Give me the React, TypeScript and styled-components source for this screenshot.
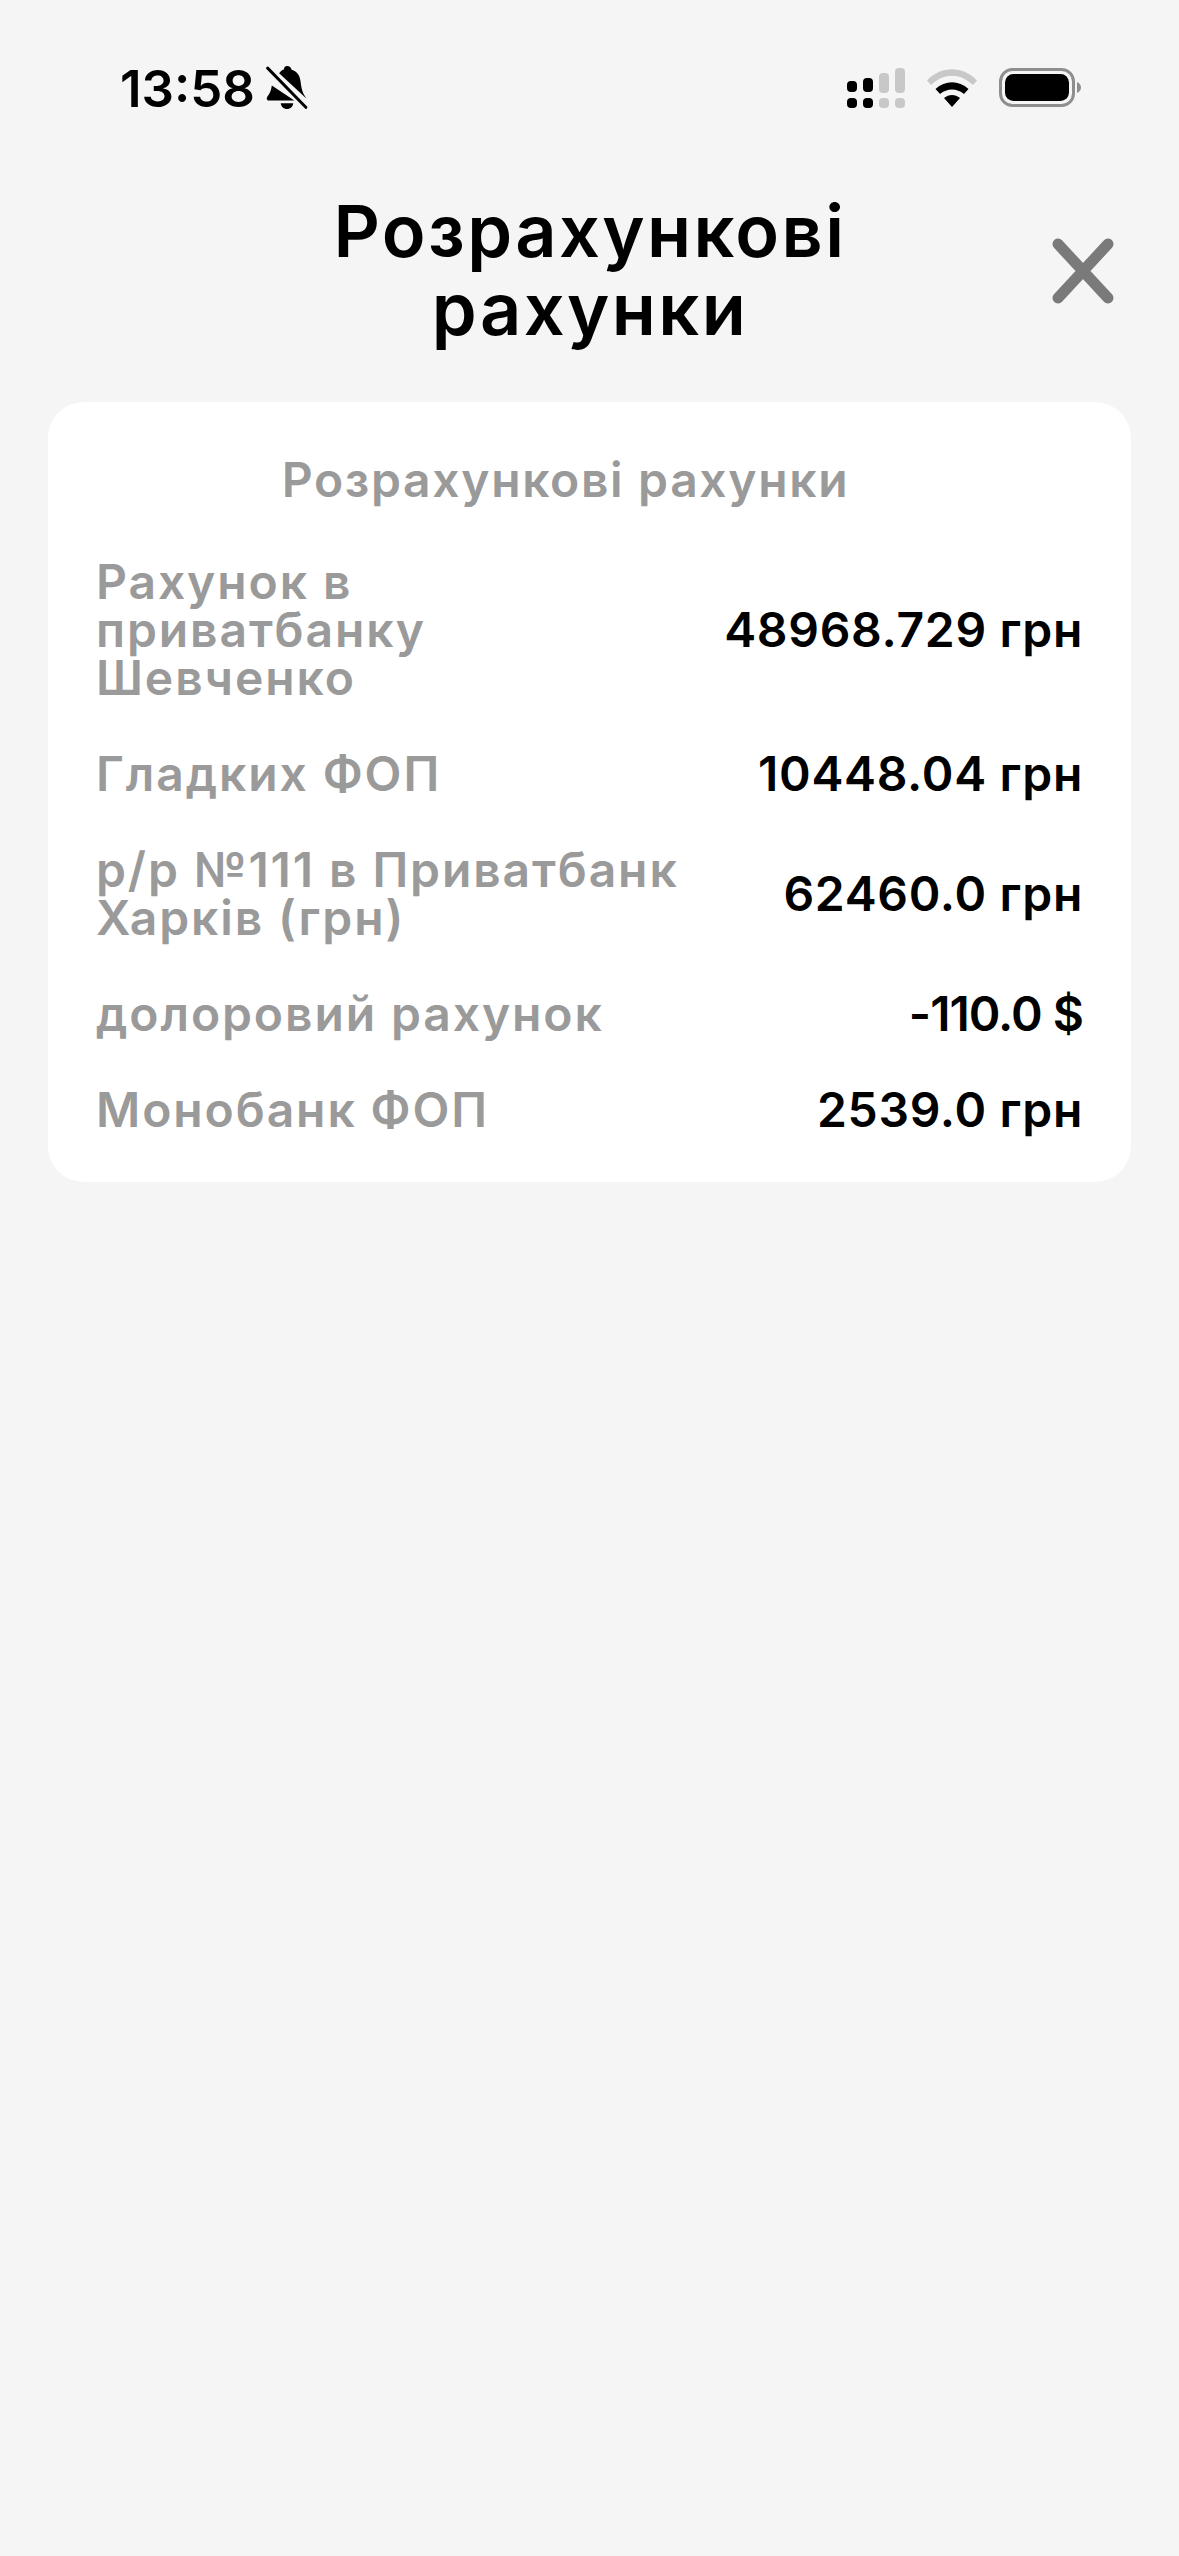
import React from "react";
import styled, { createGlobalStyle } from "styled-components";

const Global = createGlobalStyle`
  html, body { margin: 0; padding: 0; background: #f5f5f5; }
  * { box-sizing: border-box; }
`;
const Page = styled.div`
  width: 1179px; height: 2556px; background: #f5f5f5; overflow: hidden;
  font-family: Inter, "Noto Sans", sans-serif;
`;
const StatusBar = styled.div`
  height: 176px; display: flex; align-items: center; justify-content: space-between;
  padding: 0 98px 0 120px;
`;
const TimeGroup = styled.div`display: flex; align-items: center; gap: 11px;`;
const Time = styled.span`font-size: 51px; font-weight: 600; color: #000; line-height: 1; letter-spacing: 0;`;
const Indicators = styled.div`display: flex; align-items: center; gap: 22px;`;
const Header = styled.header`
  height: 226px; padding: 16px 65px 0 48px; display: flex; align-items: flex-start;
`;
const Title = styled.h1`
  flex: 1; margin: 0; text-align: center; font-size: 72px; line-height: 78px; font-weight: 600;
  color: #000; padding: 0 0 0 80px; letter-spacing: 2.4px;
`;
const Close = styled.button`
  border: 0; background: none; padding: 0; width: 62px; height: 66px; margin-top: 46px; display: block;
`;
const Card = styled.section`
  margin: 0 48px; background: #fff; border-radius: 36px; padding: 48px;
  display: flex; flex-direction: column; gap: 48px;
`;
const CardTitle = styled.h2`
  margin: 0; padding-right: 48px; text-align: center; font-size: 48px; line-height: 60px; font-weight: 600;
  color: #9a9a9a; letter-spacing: 1.65px;
`;
const Row = styled.div`display: flex; align-items: center; justify-content: space-between;`;
const Label = styled.div<{ $narrow?: boolean }>`
  font-size: 48px; line-height: 48px; font-weight: 600; color: #9a9a9a;
  max-width: ${(p) => (p.$narrow ? "400px" : "590px")}; letter-spacing: 1.9px;
`;
const Value = styled.div<{ $tight?: boolean }>`
  font-size: 48px; line-height: 48px; font-weight: 600; color: #000; white-space: nowrap;
  letter-spacing: ${(p) => (p.$tight ? "-1px" : "0.7px")};
`;

type Account = { label: string; value: string; narrow?: boolean; tight?: boolean };
const rows: Account[] = [
  { label: "Рахунок в приватбанку Шевченко", value: "48968.729 грн", narrow: true },
  { label: "Гладких ФОП", value: "10448.04 грн" },
  { label: "р/р №111 в Приватбанк Харків (грн)", value: "62460.0 грн" },
  { label: "долоровий рахунок", value: "-110.0 $", tight: true },
  { label: "Монобанк ФОП", value: "2539.0 грн" },
];

const Bell = () => (
  <svg width="42" height="46" viewBox="0 0 40 44">
    <path d="M20 1c2.400 0 4 1.600 4.400 3.600C30 6.300 32.500 10.500 33 16c.5 5 1.500 9 3 12l2.500 4-26-24C14 5.500 16 4.500 17 4.300 17.300 2.500 18 1 20 1z" fill="#000"/>
    <path d="M5.500 19.500 27 34H3c-2 0-3-1.500-2-3.500 2.500-3 3.800-6 4.500-11z" fill="#000"/>
    <path d="M14 36.500h12c-.5 3.500-3 5.500-6 5.500s-5.500-2-6-5.500z" fill="#000"/>
    <path d="M3.500 3 39.500 40" stroke="#f5f5f5" strokeWidth="5"/>
    <path d="M1.500 3 38 40.500" stroke="#000" strokeWidth="2.800" strokeLinecap="round"/>
  </svg>
);
const Signal = () => (
  <svg width="58" height="40" viewBox="0 0 58 40">
    <g fill="#000">
      <rect x="0" y="13" width="10" height="11" rx="4"/><rect x="16" y="10" width="10" height="14" rx="4"/>
      <rect x="0" y="30" width="10" height="10" rx="4"/><rect x="16" y="30" width="10" height="10" rx="4"/>
    </g>
    <g fill="#c8c8c8">
      <rect x="32" y="5" width="10" height="20" rx="4"/><rect x="48" y="0" width="10" height="25" rx="4"/>
      <rect x="32" y="30" width="10" height="10" rx="4"/><rect x="48" y="30" width="10" height="10" rx="4"/>
    </g>
  </svg>
);
const Wifi = () => (
  <svg width="50" height="38" viewBox="0 0 50 38">
    <path d="M0 11.500C14-3.500 36-3.500 50 11.500l-4 4.500C33 3.500 17 3.500 4 16z" fill="#c8c8c8"/>
    <path d="M8.500 20C18 11 32 11 41.500 20l-4.500 5c-7-6-17-6-24 0z" fill="#000"/>
    <path d="M17 29c5-4 11-4 16 0l-8 9z" fill="#000"/>
  </svg>
);
const Battery = () => (
  <svg width="82" height="40" viewBox="0 0 82 40">
    <rect x="1.500" y="1.500" width="73" height="36" rx="12" fill="none" stroke="#8e8e8e" strokeWidth="3"/>
    <rect x="6" y="6" width="64" height="27" rx="8.500" fill="#000"/>
    <path d="M78 14c2.500 1 4 3 4 5.500s-1.500 4.500-4 5.500z" fill="#8e8e8e"/>
  </svg>
);

export default function App() {
  return (
    <Page>
      <Global />
      <StatusBar>
        <TimeGroup><Time>13:58</Time><Bell /></TimeGroup>
        <Indicators><Signal /><Wifi /><Battery /></Indicators>
      </StatusBar>
      <Header>
        <Title>Розрахункові<br />рахунки</Title>
        <Close aria-label="Закрити">
          <svg width="62" height="66" viewBox="0 0 62 66">
            <path d="M6 6 56 60M56 6 6 60" stroke="#7a7a7a" strokeWidth="11" strokeLinecap="round"/>
          </svg>
        </Close>
      </Header>
      <Card>
        <CardTitle>Розрахункові рахунки</CardTitle>
        {rows.map((r) => (
          <Row key={r.label}>
            <Label $narrow={r.narrow}>{r.label}</Label>
            <Value $tight={r.tight}>{r.value}</Value>
          </Row>
        ))}
      </Card>
    </Page>
  );
}
